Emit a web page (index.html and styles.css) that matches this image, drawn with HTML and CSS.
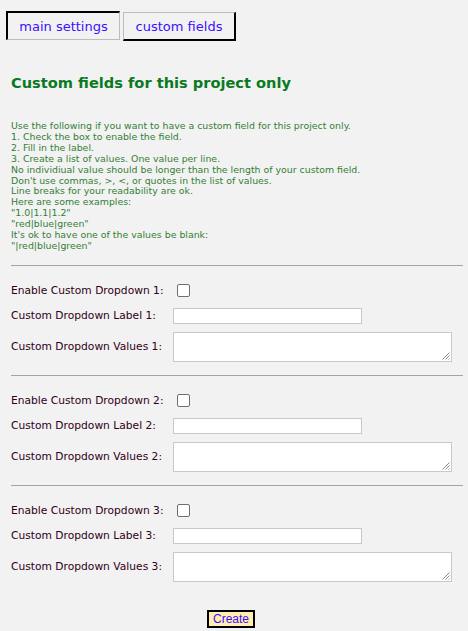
FILE: index.html
```html
<!DOCTYPE html>
<html>
<head>
<meta charset="utf-8">
<link rel="stylesheet" href="styles.css">
</head>
<body>
<div class="tabs">
  <a class="tab tab-main">main settings</a>
  <a class="tab tab-custom">custom fields</a>
</div>
<h2 class="title">Custom fields for this project only</h2>
<div class="help">
Use the following if you want to have a custom field for this project only.<br>
1. Check the box to enable the field.<br>
2. Fill in the label.<br>
3. Create a list of values. One value per line.<br>
No individiual value should be longer than the length of your custom field.<br>
Don't use commas, &gt;, &lt;, or quotes in the list of values.<br>
Line breaks for your readability are ok.<br>
Here are some examples:<br>
"1.0|1.1|1.2"<br>
"red|blue|green"<br>
It's ok to have one of the values be blank:<br>
"|red|blue|green"
</div>
<hr class="sep">
<div class="group">
  <div class="row row-check"><span class="lbl">Enable Custom Dropdown 1:</span><span class="box"></span></div>
  <div class="row row-input"><span class="lbl">Custom Dropdown Label 1:</span><span class="input"></span></div>
  <div class="row row-area"><span class="lbl">Custom Dropdown Values 1:</span><span class="area"><svg class="grip" width="8" height="8" viewBox="0 0 8 8"><path d="M7.5 0.5L0.5 7.5M7.5 3.5L3.5 7.5M7.5 6.5L6.5 7.5" stroke="#8a8a8a" stroke-width="1"/></svg></span></div>
</div>
<hr class="sep">
<div class="group">
  <div class="row row-check"><span class="lbl">Enable Custom Dropdown 2:</span><span class="box"></span></div>
  <div class="row row-input"><span class="lbl">Custom Dropdown Label 2:</span><span class="input"></span></div>
  <div class="row row-area"><span class="lbl">Custom Dropdown Values 2:</span><span class="area"><svg class="grip" width="8" height="8" viewBox="0 0 8 8"><path d="M7.5 0.5L0.5 7.5M7.5 3.5L3.5 7.5M7.5 6.5L6.5 7.5" stroke="#8a8a8a" stroke-width="1"/></svg></span></div>
</div>
<hr class="sep">
<div class="group">
  <div class="row row-check"><span class="lbl">Enable Custom Dropdown 3:</span><span class="box"></span></div>
  <div class="row row-input"><span class="lbl">Custom Dropdown Label 3:</span><span class="input"></span></div>
  <div class="row row-area"><span class="lbl">Custom Dropdown Values 3:</span><span class="area"><svg class="grip" width="8" height="8" viewBox="0 0 8 8"><path d="M7.5 0.5L0.5 7.5M7.5 3.5L3.5 7.5M7.5 6.5L6.5 7.5" stroke="#8a8a8a" stroke-width="1"/></svg></span></div>
</div>
<div class="actions"><span class="btn">Create</span></div>
</body>
</html>
```
FILE: styles.css
```css
html, body { margin: 0; padding: 0; background: #f2f2f2; }
body { font-family: "DejaVu Sans", Verdana, sans-serif; width: 468px; height: 631px; overflow: hidden; }
.tabs { display: flex; gap: 3px; padding: 11px 0 0 6px; }
.tab { box-sizing: border-box; height: 29px; display: flex; align-items: center; justify-content: center; font-size: 13px; color: #3a10ff; }
.tab-main { width: 114px; border-top: 2px solid #000; border-left: 2px solid #000; border-right: 1px solid #bdbdbd; border-bottom: 1px solid #bdbdbd; }
.tab-custom { width: 113px; margin-top: 1px; border-top: 1px solid #bdbdbd; border-left: 1px solid #bdbdbd; border-right: 2px solid #000; border-bottom: 2px solid #000; }
.title { margin: 32px 0 0 11px; font-size: 14.6px; font-weight: bold; color: #0a7a22; line-height: 20px; }
.help { margin: 28px 0 0 11px; font-size: 9.4px; line-height: 10.9px; color: #338035; }
.sep { margin: 13px 5px 0 11px; border: 0; border-top: 1px solid #a3a3a3; height: 0; }
.group { padding: 15px 0 0 11px; }
.group + .sep { margin-top: 13px; }
.row { display: grid; grid-template-columns: 162px 1fr; align-items: center; font-size: 10.7px; color: #300018; }
.row-check { height: 19px; }
.box { box-sizing: border-box; width: 13px; height: 13px; margin-left: 4px; border: 1px solid #6f6f6f; border-radius: 2px; background: #fff; }
.row-input { margin-top: 8px; height: 16px; }
.input { box-sizing: border-box; width: 189px; height: 16px; background: #fff; border: 1px solid #c8c8c8; }
.row-area { margin-top: 8px; height: 30px; }
.area { position: relative; box-sizing: border-box; width: 279px; height: 30px; background: #fff; border: 1px solid #c8c8c8; }
.grip { position: absolute; right: 1px; bottom: 1px; }
.actions { padding: 28px 0 0 207px; }
.btn { display: block; box-sizing: border-box; width: 48px; height: 18px; border: 2px solid #000; background: #ffeeb0; font-family: "Liberation Sans", Arial, sans-serif; font-size: 12px; color: #3a10ff; text-align: center; line-height: 14px; }
```
